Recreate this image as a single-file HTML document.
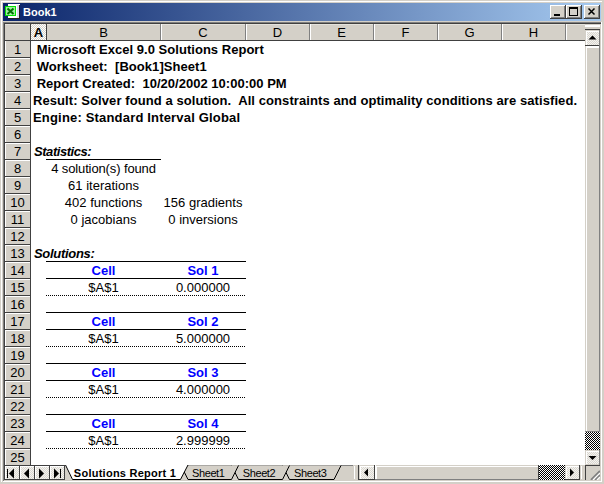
<!DOCTYPE html>
<html><head><meta charset="utf-8"><style>
html,body{margin:0;padding:0;}
body{width:604px;height:484px;overflow:hidden;background:#D4D0C8;position:relative;font-family:"Liberation Sans",sans-serif;}
body>div,body>svg{position:absolute;}
.t{white-space:pre;overflow:visible;}
</style></head><body>
<div style="left:1px;top:1px;width:601px;height:1px;background:#FFFFFF;"></div>
<div style="left:1px;top:1px;width:1px;height:481px;background:#FFFFFF;"></div>
<div style="left:3px;top:3px;width:598px;height:18px;background:linear-gradient(to right,#0A246A,#A6CAF0);"></div>
<svg style="left:5px;top:4px" width="16" height="16" viewBox="0 0 16 16">
<rect x="3" y="0" width="12" height="14" fill="#fff"/>
<rect x="12" y="1" width="2" height="13" fill="#E0D8F0"/>
<rect x="14" y="1" width="1" height="14" fill="#202020"/>
<rect x="3" y="14" width="12" height="1" fill="#202020"/>
<rect x="0" y="2" width="11" height="10" fill="#00E000"/>
<rect x="1" y="3" width="9" height="8" fill="#A0F0A0"/>
<path d="M2.5 4.5 L8.5 10 M8.5 4.5 L2.5 10" stroke="#007000" stroke-width="2"/>
</svg>
<div class="t" style="left:23px;top:3px;width:80px;height:18px;line-height:18px;text-align:left;font-weight:bold;font-size:11px;color:#fff">Book1</div>
<div style="left:550px;top:5px;width:16px;height:14px;background:#D4D0C8;box-shadow:inset -1px -1px #404040,inset 1px 1px #FFFFFF,inset -2px -2px #808080;"></div>
<svg style="left:550px;top:5px" width="16" height="14" viewBox="0 0 16 14"><rect x="4" y="9" width="6" height="2" fill="#000"/></svg>
<div style="left:566px;top:5px;width:16px;height:14px;background:#D4D0C8;box-shadow:inset -1px -1px #404040,inset 1px 1px #FFFFFF,inset -2px -2px #808080;"></div>
<svg style="left:566px;top:5px" width="16" height="14" viewBox="0 0 16 14"><rect x="3.5" y="2.5" width="8" height="8" fill="none" stroke="#000"/><rect x="3" y="3" width="9" height="1" fill="#000"/></svg>
<div style="left:584px;top:5px;width:16px;height:14px;background:#D4D0C8;box-shadow:inset -1px -1px #404040,inset 1px 1px #FFFFFF,inset -2px -2px #808080;"></div>
<svg style="left:584px;top:5px" width="16" height="14" viewBox="0 0 16 14"><path d="M4.5 3.5 L10.5 9.5 M10.5 3.5 L4.5 9.5" stroke="#000" stroke-width="1.5"/></svg>
<div style="left:3px;top:22px;width:598px;height:1px;background:#808080;"></div>
<div style="left:3px;top:22px;width:1px;height:459px;background:#808080;"></div>
<div style="left:4px;top:23px;width:597px;height:1px;background:#404040;"></div>
<div style="left:4px;top:23px;width:1px;height:457px;background:#404040;"></div>
<div style="left:601px;top:22px;width:1px;height:460px;background:#FFFFFF;"></div>
<div style="left:3px;top:481px;width:599px;height:1px;background:#FFFFFF;"></div>
<div style="left:31px;top:41px;width:554px;height:424px;background:#fff;"></div>
<div style="left:5px;top:24px;width:580px;height:16px;background:#D4D0C8;"></div>
<div style="left:5px;top:24px;width:580px;height:1px;background:#E4E2DC;"></div>
<div style="left:5px;top:40px;width:580px;height:1px;background:#404040;"></div>
<div style="left:5px;top:41px;width:25px;height:424px;background:#D4D0C8;"></div>
<div style="left:5px;top:41px;width:1px;height:424px;background:#FFFFFF;"></div>
<div style="left:30px;top:24px;width:1px;height:441px;background:#404040;"></div>
<div style="left:160px;top:24px;width:1px;height:16px;background:#808080;"></div>
<div style="left:161px;top:24px;width:1px;height:16px;background:#FFFFFF;"></div>
<div style="left:245px;top:24px;width:1px;height:16px;background:#808080;"></div>
<div style="left:246px;top:24px;width:1px;height:16px;background:#FFFFFF;"></div>
<div style="left:309px;top:24px;width:1px;height:16px;background:#808080;"></div>
<div style="left:310px;top:24px;width:1px;height:16px;background:#FFFFFF;"></div>
<div style="left:373px;top:24px;width:1px;height:16px;background:#808080;"></div>
<div style="left:374px;top:24px;width:1px;height:16px;background:#FFFFFF;"></div>
<div style="left:437px;top:24px;width:1px;height:16px;background:#808080;"></div>
<div style="left:438px;top:24px;width:1px;height:16px;background:#FFFFFF;"></div>
<div style="left:501px;top:24px;width:1px;height:16px;background:#808080;"></div>
<div style="left:502px;top:24px;width:1px;height:16px;background:#FFFFFF;"></div>
<div style="left:565px;top:24px;width:1px;height:16px;background:#808080;"></div>
<div style="left:566px;top:24px;width:1px;height:16px;background:#FFFFFF;"></div>
<div style="left:31px;top:24px;width:15px;height:16px;background:repeating-conic-gradient(#fff 0 25%,#D4D0C8 0 50%) 0 0/2px 2px;"></div>
<div style="left:30px;top:23px;width:17px;height:1px;background:#404040;"></div>
<div style="left:46px;top:24px;width:1px;height:17px;background:#404040;"></div>
<div class="t" style="left:31px;top:25px;width:15px;height:16px;line-height:16px;text-align:center;font-size:13px;color:#000;font-weight:bold">A</div>
<div class="t" style="left:47px;top:25px;width:113px;height:16px;line-height:16px;text-align:center;font-size:13px;color:#000">B</div>
<div class="t" style="left:161px;top:25px;width:84px;height:16px;line-height:16px;text-align:center;font-size:13px;color:#000">C</div>
<div class="t" style="left:246px;top:25px;width:63px;height:16px;line-height:16px;text-align:center;font-size:13px;color:#000">D</div>
<div class="t" style="left:310px;top:25px;width:63px;height:16px;line-height:16px;text-align:center;font-size:13px;color:#000">E</div>
<div class="t" style="left:374px;top:25px;width:63px;height:16px;line-height:16px;text-align:center;font-size:13px;color:#000">F</div>
<div class="t" style="left:438px;top:25px;width:63px;height:16px;line-height:16px;text-align:center;font-size:13px;color:#000">G</div>
<div class="t" style="left:502px;top:25px;width:63px;height:16px;line-height:16px;text-align:center;font-size:13px;color:#000">H</div>
<div style="left:5px;top:57px;width:25px;height:1px;background:#404040;"></div>
<div class="t" style="left:5px;top:42px;width:25px;height:16px;line-height:16px;text-align:center;font-size:13px;color:#000">1</div>
<div style="left:5px;top:74px;width:25px;height:1px;background:#404040;"></div>
<div style="left:5px;top:58px;width:25px;height:1px;background:#FFFFFF;"></div>
<div class="t" style="left:5px;top:59px;width:25px;height:16px;line-height:16px;text-align:center;font-size:13px;color:#000">2</div>
<div style="left:5px;top:91px;width:25px;height:1px;background:#404040;"></div>
<div style="left:5px;top:75px;width:25px;height:1px;background:#FFFFFF;"></div>
<div class="t" style="left:5px;top:76px;width:25px;height:16px;line-height:16px;text-align:center;font-size:13px;color:#000">3</div>
<div style="left:5px;top:108px;width:25px;height:1px;background:#404040;"></div>
<div style="left:5px;top:92px;width:25px;height:1px;background:#FFFFFF;"></div>
<div class="t" style="left:5px;top:93px;width:25px;height:16px;line-height:16px;text-align:center;font-size:13px;color:#000">4</div>
<div style="left:5px;top:125px;width:25px;height:1px;background:#404040;"></div>
<div style="left:5px;top:109px;width:25px;height:1px;background:#FFFFFF;"></div>
<div class="t" style="left:5px;top:110px;width:25px;height:16px;line-height:16px;text-align:center;font-size:13px;color:#000">5</div>
<div style="left:5px;top:142px;width:25px;height:1px;background:#404040;"></div>
<div style="left:5px;top:126px;width:25px;height:1px;background:#FFFFFF;"></div>
<div class="t" style="left:5px;top:127px;width:25px;height:16px;line-height:16px;text-align:center;font-size:13px;color:#000">6</div>
<div style="left:5px;top:159px;width:25px;height:1px;background:#404040;"></div>
<div style="left:5px;top:143px;width:25px;height:1px;background:#FFFFFF;"></div>
<div class="t" style="left:5px;top:144px;width:25px;height:16px;line-height:16px;text-align:center;font-size:13px;color:#000">7</div>
<div style="left:5px;top:176px;width:25px;height:1px;background:#404040;"></div>
<div style="left:5px;top:160px;width:25px;height:1px;background:#FFFFFF;"></div>
<div class="t" style="left:5px;top:161px;width:25px;height:16px;line-height:16px;text-align:center;font-size:13px;color:#000">8</div>
<div style="left:5px;top:193px;width:25px;height:1px;background:#404040;"></div>
<div style="left:5px;top:177px;width:25px;height:1px;background:#FFFFFF;"></div>
<div class="t" style="left:5px;top:178px;width:25px;height:16px;line-height:16px;text-align:center;font-size:13px;color:#000">9</div>
<div style="left:5px;top:210px;width:25px;height:1px;background:#404040;"></div>
<div style="left:5px;top:194px;width:25px;height:1px;background:#FFFFFF;"></div>
<div class="t" style="left:5px;top:195px;width:25px;height:16px;line-height:16px;text-align:center;font-size:13px;color:#000">10</div>
<div style="left:5px;top:227px;width:25px;height:1px;background:#404040;"></div>
<div style="left:5px;top:211px;width:25px;height:1px;background:#FFFFFF;"></div>
<div class="t" style="left:5px;top:212px;width:25px;height:16px;line-height:16px;text-align:center;font-size:13px;color:#000">11</div>
<div style="left:5px;top:244px;width:25px;height:1px;background:#404040;"></div>
<div style="left:5px;top:228px;width:25px;height:1px;background:#FFFFFF;"></div>
<div class="t" style="left:5px;top:229px;width:25px;height:16px;line-height:16px;text-align:center;font-size:13px;color:#000">12</div>
<div style="left:5px;top:261px;width:25px;height:1px;background:#404040;"></div>
<div style="left:5px;top:245px;width:25px;height:1px;background:#FFFFFF;"></div>
<div class="t" style="left:5px;top:246px;width:25px;height:16px;line-height:16px;text-align:center;font-size:13px;color:#000">13</div>
<div style="left:5px;top:278px;width:25px;height:1px;background:#404040;"></div>
<div style="left:5px;top:262px;width:25px;height:1px;background:#FFFFFF;"></div>
<div class="t" style="left:5px;top:263px;width:25px;height:16px;line-height:16px;text-align:center;font-size:13px;color:#000">14</div>
<div style="left:5px;top:295px;width:25px;height:1px;background:#404040;"></div>
<div style="left:5px;top:279px;width:25px;height:1px;background:#FFFFFF;"></div>
<div class="t" style="left:5px;top:280px;width:25px;height:16px;line-height:16px;text-align:center;font-size:13px;color:#000">15</div>
<div style="left:5px;top:312px;width:25px;height:1px;background:#404040;"></div>
<div style="left:5px;top:296px;width:25px;height:1px;background:#FFFFFF;"></div>
<div class="t" style="left:5px;top:297px;width:25px;height:16px;line-height:16px;text-align:center;font-size:13px;color:#000">16</div>
<div style="left:5px;top:329px;width:25px;height:1px;background:#404040;"></div>
<div style="left:5px;top:313px;width:25px;height:1px;background:#FFFFFF;"></div>
<div class="t" style="left:5px;top:314px;width:25px;height:16px;line-height:16px;text-align:center;font-size:13px;color:#000">17</div>
<div style="left:5px;top:346px;width:25px;height:1px;background:#404040;"></div>
<div style="left:5px;top:330px;width:25px;height:1px;background:#FFFFFF;"></div>
<div class="t" style="left:5px;top:331px;width:25px;height:16px;line-height:16px;text-align:center;font-size:13px;color:#000">18</div>
<div style="left:5px;top:363px;width:25px;height:1px;background:#404040;"></div>
<div style="left:5px;top:347px;width:25px;height:1px;background:#FFFFFF;"></div>
<div class="t" style="left:5px;top:348px;width:25px;height:16px;line-height:16px;text-align:center;font-size:13px;color:#000">19</div>
<div style="left:5px;top:380px;width:25px;height:1px;background:#404040;"></div>
<div style="left:5px;top:364px;width:25px;height:1px;background:#FFFFFF;"></div>
<div class="t" style="left:5px;top:365px;width:25px;height:16px;line-height:16px;text-align:center;font-size:13px;color:#000">20</div>
<div style="left:5px;top:397px;width:25px;height:1px;background:#404040;"></div>
<div style="left:5px;top:381px;width:25px;height:1px;background:#FFFFFF;"></div>
<div class="t" style="left:5px;top:382px;width:25px;height:16px;line-height:16px;text-align:center;font-size:13px;color:#000">21</div>
<div style="left:5px;top:414px;width:25px;height:1px;background:#404040;"></div>
<div style="left:5px;top:398px;width:25px;height:1px;background:#FFFFFF;"></div>
<div class="t" style="left:5px;top:399px;width:25px;height:16px;line-height:16px;text-align:center;font-size:13px;color:#000">22</div>
<div style="left:5px;top:431px;width:25px;height:1px;background:#404040;"></div>
<div style="left:5px;top:415px;width:25px;height:1px;background:#FFFFFF;"></div>
<div class="t" style="left:5px;top:416px;width:25px;height:16px;line-height:16px;text-align:center;font-size:13px;color:#000">23</div>
<div style="left:5px;top:448px;width:25px;height:1px;background:#404040;"></div>
<div style="left:5px;top:432px;width:25px;height:1px;background:#FFFFFF;"></div>
<div class="t" style="left:5px;top:433px;width:25px;height:16px;line-height:16px;text-align:center;font-size:13px;color:#000">24</div>
<div style="left:5px;top:465px;width:25px;height:1px;background:#404040;"></div>
<div style="left:5px;top:449px;width:25px;height:1px;background:#FFFFFF;"></div>
<div class="t" style="left:5px;top:450px;width:25px;height:16px;line-height:16px;text-align:center;font-size:13px;color:#000">25</div>
<div class="t" style="left:33px;top:41px;width:540px;height:17px;line-height:17px;text-align:left;font-weight:bold;font-size:13px;color:#000;letter-spacing:0.03px">&nbsp;Microsoft Excel 9.0 Solutions Report</div>
<div class="t" style="left:33px;top:58px;width:540px;height:17px;line-height:17px;text-align:left;font-weight:bold;font-size:13px;color:#000;letter-spacing:0.05px">&nbsp;Worksheet:&nbsp; [Book1]Sheet1</div>
<div class="t" style="left:33px;top:75px;width:540px;height:17px;line-height:17px;text-align:left;font-weight:bold;font-size:13px;color:#000;letter-spacing:0.02px">&nbsp;Report Created:&nbsp; 10/20/2002 10:00:00 PM</div>
<div class="t" style="left:33px;top:92px;width:560px;height:17px;line-height:17px;text-align:left;font-weight:bold;font-size:13px;color:#000;letter-spacing:0.08px">Result: Solver found a solution.&nbsp; All constraints and optimality conditions are satisfied.</div>
<div class="t" style="left:33px;top:109px;width:540px;height:17px;line-height:17px;text-align:left;font-weight:bold;font-size:13px;color:#000;letter-spacing:0.18px">Engine: Standard Interval Global</div>
<div class="t" style="left:34px;top:143px;width:200px;height:17px;line-height:17px;text-align:left;font-weight:bold;font-style:italic;font-size:13px;color:#000;letter-spacing:-0.45px">Statistics:</div>
<div style="left:46px;top:159px;width:115px;height:1px;background:#000;"></div>
<div class="t" style="left:47px;top:160px;width:113px;height:17px;line-height:17px;text-align:center;font-size:13px;color:#000;letter-spacing:-0.12px">4 solution(s) found</div>
<div class="t" style="left:47px;top:177px;width:113px;height:17px;line-height:17px;text-align:center;font-size:13px;color:#000">61 iterations</div>
<div class="t" style="left:47px;top:194px;width:113px;height:17px;line-height:17px;text-align:center;font-size:13px;color:#000">402 functions</div>
<div class="t" style="left:161px;top:194px;width:84px;height:17px;line-height:17px;text-align:center;font-size:13px;color:#000">156 gradients</div>
<div class="t" style="left:47px;top:211px;width:113px;height:17px;line-height:17px;text-align:center;font-size:13px;color:#000">0 jacobians</div>
<div class="t" style="left:161px;top:211px;width:84px;height:17px;line-height:17px;text-align:center;font-size:13px;color:#000">0 inversions</div>
<div class="t" style="left:34px;top:245px;width:200px;height:17px;line-height:17px;text-align:left;font-weight:bold;font-style:italic;font-size:13px;color:#000;letter-spacing:-0.3px">Solutions:</div>
<div style="left:46px;top:261px;width:200px;height:1px;background:#000;"></div>
<div class="t" style="left:47px;top:262px;width:113px;height:17px;line-height:17px;text-align:center;font-weight:bold;font-size:13px;color:#00f">Cell</div>
<div class="t" style="left:161px;top:262px;width:84px;height:17px;line-height:17px;text-align:center;font-weight:bold;font-size:13px;color:#00f">Sol 1</div>
<div style="left:46px;top:278px;width:200px;height:1px;background:#000;"></div>
<div class="t" style="left:47px;top:279px;width:113px;height:17px;line-height:17px;text-align:center;font-size:13px;color:#000">$A$1</div>
<div class="t" style="left:161px;top:279px;width:84px;height:17px;line-height:17px;text-align:center;font-size:13px;color:#000">0.000000</div>
<div style="left:46px;top:295px;width:200px;height:1px;background:repeating-linear-gradient(to right,#000 0 1px,transparent 1px 2px);"></div>
<div style="left:46px;top:312px;width:200px;height:1px;background:#000;"></div>
<div class="t" style="left:47px;top:313px;width:113px;height:17px;line-height:17px;text-align:center;font-weight:bold;font-size:13px;color:#00f">Cell</div>
<div class="t" style="left:161px;top:313px;width:84px;height:17px;line-height:17px;text-align:center;font-weight:bold;font-size:13px;color:#00f">Sol 2</div>
<div style="left:46px;top:329px;width:200px;height:1px;background:#000;"></div>
<div class="t" style="left:47px;top:330px;width:113px;height:17px;line-height:17px;text-align:center;font-size:13px;color:#000">$A$1</div>
<div class="t" style="left:161px;top:330px;width:84px;height:17px;line-height:17px;text-align:center;font-size:13px;color:#000">5.000000</div>
<div style="left:46px;top:346px;width:200px;height:1px;background:repeating-linear-gradient(to right,#000 0 1px,transparent 1px 2px);"></div>
<div style="left:46px;top:363px;width:200px;height:1px;background:#000;"></div>
<div class="t" style="left:47px;top:364px;width:113px;height:17px;line-height:17px;text-align:center;font-weight:bold;font-size:13px;color:#00f">Cell</div>
<div class="t" style="left:161px;top:364px;width:84px;height:17px;line-height:17px;text-align:center;font-weight:bold;font-size:13px;color:#00f">Sol 3</div>
<div style="left:46px;top:380px;width:200px;height:1px;background:#000;"></div>
<div class="t" style="left:47px;top:381px;width:113px;height:17px;line-height:17px;text-align:center;font-size:13px;color:#000">$A$1</div>
<div class="t" style="left:161px;top:381px;width:84px;height:17px;line-height:17px;text-align:center;font-size:13px;color:#000">4.000000</div>
<div style="left:46px;top:397px;width:200px;height:1px;background:repeating-linear-gradient(to right,#000 0 1px,transparent 1px 2px);"></div>
<div style="left:46px;top:414px;width:200px;height:1px;background:#000;"></div>
<div class="t" style="left:47px;top:415px;width:113px;height:17px;line-height:17px;text-align:center;font-weight:bold;font-size:13px;color:#00f">Cell</div>
<div class="t" style="left:161px;top:415px;width:84px;height:17px;line-height:17px;text-align:center;font-weight:bold;font-size:13px;color:#00f">Sol 4</div>
<div style="left:46px;top:431px;width:200px;height:1px;background:#000;"></div>
<div class="t" style="left:47px;top:432px;width:113px;height:17px;line-height:17px;text-align:center;font-size:13px;color:#000">$A$1</div>
<div class="t" style="left:161px;top:432px;width:84px;height:17px;line-height:17px;text-align:center;font-size:13px;color:#000">2.999999</div>
<div style="left:46px;top:448px;width:200px;height:1px;background:repeating-linear-gradient(to right,#000 0 1px,transparent 1px 2px);"></div>
<div style="left:5px;top:465px;width:60px;height:1px;background:#404040;"></div>
<div style="left:5px;top:479px;width:60px;height:1px;background:#404040;"></div>
<div style="left:5px;top:466px;width:15px;height:13px;background:repeating-conic-gradient(#F4F3F0 0 25%,#DAD7D0 0 50%) 0 0/2px 2px;"></div>
<div style="left:5px;top:466px;width:14px;height:1px;background:#FFFFFF;"></div>
<div style="left:5px;top:466px;width:1px;height:13px;background:#FFFFFF;"></div>
<div style="left:19px;top:466px;width:1px;height:13px;background:#404040;"></div>
<div style="left:20px;top:466px;width:15px;height:13px;background:repeating-conic-gradient(#F4F3F0 0 25%,#DAD7D0 0 50%) 0 0/2px 2px;"></div>
<div style="left:20px;top:466px;width:14px;height:1px;background:#FFFFFF;"></div>
<div style="left:20px;top:466px;width:1px;height:13px;background:#FFFFFF;"></div>
<div style="left:34px;top:466px;width:1px;height:13px;background:#404040;"></div>
<div style="left:35px;top:466px;width:15px;height:13px;background:repeating-conic-gradient(#F4F3F0 0 25%,#DAD7D0 0 50%) 0 0/2px 2px;"></div>
<div style="left:35px;top:466px;width:14px;height:1px;background:#FFFFFF;"></div>
<div style="left:35px;top:466px;width:1px;height:13px;background:#FFFFFF;"></div>
<div style="left:49px;top:466px;width:1px;height:13px;background:#404040;"></div>
<div style="left:50px;top:466px;width:15px;height:13px;background:repeating-conic-gradient(#F4F3F0 0 25%,#DAD7D0 0 50%) 0 0/2px 2px;"></div>
<div style="left:50px;top:466px;width:14px;height:1px;background:#FFFFFF;"></div>
<div style="left:50px;top:466px;width:1px;height:13px;background:#FFFFFF;"></div>
<div style="left:64px;top:466px;width:1px;height:13px;background:#404040;"></div>
<svg style="left:5px;top:466px" width="60" height="13" viewBox="0 0 60 13">
<rect x="2" y="3" width="1" height="9" fill="#000"/><path d="M4 7.5 L9 2.5 L9 12.5 Z" fill="#000"/>
<path d="M19 7.5 L24 2.5 L24 12.5 Z" fill="#000"/>
<path d="M39 7.5 L34 2.5 L34 12.5 Z" fill="#000"/>
<path d="M54 7.5 L49 2.5 L49 12.5 Z" fill="#000"/><rect x="55" y="3" width="1" height="9" fill="#000"/>
</svg>
<svg style="left:65px;top:465px" width="290" height="15" viewBox="0 0 290 15">
<rect x="0" y="0" width="290" height="15" fill="#D4D0C8"/>
<rect x="0" y="0" width="290" height="1" fill="#808080"/>
<path d="M217.5 0.5 L224.5 14.5 L269 14.5 L276 0.5" fill="#D4D0C8" stroke="#000" stroke-width="1"/><text x="245.25" y="11.5" font-family="Liberation Sans" font-size="11" text-anchor="middle" letter-spacing="-0.4">Sheet3</text><path d="M166.5 0.5 L173.5 14.5 L217.5 14.5 L224.5 0.5" fill="#D4D0C8" stroke="#000" stroke-width="1"/><text x="194.0" y="11.5" font-family="Liberation Sans" font-size="11" text-anchor="middle" letter-spacing="-0.4">Sheet2</text><path d="M116 0.5 L123 14.5 L166.5 14.5 L173.5 0.5" fill="#D4D0C8" stroke="#000" stroke-width="1"/><text x="143.25" y="11.5" font-family="Liberation Sans" font-size="11" text-anchor="middle" letter-spacing="-0.4">Sheet1</text><path d="M0 0 L7 14.5 L115 14.5 L123 0 Z" fill="#fff"/><path d="M0.5 0 L7.5 14.5 L115.5 14.5 L123 0" fill="none" stroke="#000" stroke-width="1"/><text x="60" y="11.5" font-family="Liberation Sans" font-size="11" font-weight="bold" text-anchor="middle" letter-spacing="0.25">Solutions Report 1</text></svg>
<div style="left:353px;top:465px;width:5px;height:15px;background:#D4D0C8;"></div>
<div style="left:354px;top:466px;width:1px;height:13px;background:#FFFFFF;"></div>
<div style="left:358px;top:465px;width:1px;height:15px;background:#404040;"></div>
<div style="left:359px;top:465px;width:16px;height:15px;background:repeating-conic-gradient(#F4F3F0 0 25%,#DAD7D0 0 50%) 0 0/2px 2px;"></div>
<div style="left:359px;top:465px;width:16px;height:1px;background:#D4D0C8;"></div>
<div style="left:359px;top:465px;width:1px;height:15px;background:#D4D0C8;"></div>
<div style="left:360px;top:466px;width:14px;height:1px;background:#FFFFFF;"></div>
<div style="left:360px;top:466px;width:1px;height:13px;background:#FFFFFF;"></div>
<div style="left:359px;top:479px;width:16px;height:1px;background:#404040;"></div>
<div style="left:374px;top:465px;width:1px;height:15px;background:#404040;"></div>
<svg style="left:359px;top:465px" width="16" height="15"><path d="M5 7.5 L9 3.5 L9 11.5 Z" fill="#000"/></svg>
<div style="left:375px;top:465px;width:164px;height:15px;background:#D4D0C8;"></div>
<div style="left:375px;top:465px;width:164px;height:1px;background:#D4D0C8;"></div>
<div style="left:375px;top:465px;width:1px;height:15px;background:#FFFFFF;"></div>
<div style="left:376px;top:466px;width:162px;height:1px;background:#FFFFFF;"></div>
<div style="left:376px;top:466px;width:1px;height:13px;background:#FFFFFF;"></div>
<div style="left:375px;top:479px;width:164px;height:1px;background:#808080;"></div>
<div style="left:538px;top:465px;width:1px;height:15px;background:#404040;"></div>
<div style="left:539px;top:465px;width:26px;height:15px;background:repeating-conic-gradient(#000 0 25%,#fff 0 50%) 0 0/2px 2px;"></div>
<div style="left:565px;top:465px;width:15px;height:15px;background:repeating-conic-gradient(#F4F3F0 0 25%,#DAD7D0 0 50%) 0 0/2px 2px;"></div>
<div style="left:565px;top:465px;width:15px;height:1px;background:#D4D0C8;"></div>
<div style="left:565px;top:465px;width:1px;height:15px;background:#D4D0C8;"></div>
<div style="left:566px;top:466px;width:13px;height:1px;background:#FFFFFF;"></div>
<div style="left:566px;top:466px;width:1px;height:13px;background:#FFFFFF;"></div>
<div style="left:565px;top:479px;width:15px;height:1px;background:#404040;"></div>
<div style="left:579px;top:465px;width:1px;height:15px;background:#404040;"></div>
<svg style="left:565px;top:465px" width="15" height="15"><path d="M9 7.5 L5 3.5 L5 11.5 Z" fill="#000"/></svg>
<div style="left:580px;top:465px;width:5px;height:15px;background:#D4D0C8;"></div>
<div style="left:581px;top:466px;width:1px;height:13px;background:#FFFFFF;"></div>
<div style="left:585px;top:465px;width:15px;height:15px;background:#D4D0C8;"></div>
<div style="left:585px;top:465px;width:15px;height:1px;background:#404040;"></div>
<div style="left:585px;top:465px;width:1px;height:15px;background:#404040;"></div>
<svg style="left:586px;top:466px" width="14" height="14"><path d="M14 5 L5 14 M14 9 L9 14" stroke="#808080" stroke-width="2"/><path d="M14 7 L7 14 M14 11 L11 14" stroke="#fff" stroke-width="1.2"/></svg>
<div style="left:585px;top:24px;width:15px;height:441px;background:#D4D0C8;"></div>
<div style="left:585px;top:25px;width:15px;height:2px;background:#FFFFFF;"></div>
<div style="left:585px;top:29px;width:15px;height:1px;background:#404040;"></div>
<div style="left:585px;top:30px;width:15px;height:16px;background:repeating-conic-gradient(#F4F3F0 0 25%,#DAD7D0 0 50%) 0 0/2px 2px;"></div>
<div style="left:585px;top:30px;width:15px;height:1px;background:#D4D0C8;"></div>
<div style="left:585px;top:30px;width:1px;height:16px;background:#D4D0C8;"></div>
<div style="left:586px;top:31px;width:13px;height:1px;background:#FFFFFF;"></div>
<div style="left:586px;top:31px;width:1px;height:14px;background:#FFFFFF;"></div>
<div style="left:585px;top:45px;width:15px;height:1px;background:#404040;"></div>
<div style="left:599px;top:30px;width:1px;height:16px;background:#808080;"></div>
<svg style="left:585px;top:30px" width="15" height="16"><path d="M7.5 5.5 L3.5 9.5 L11.5 9.5 Z" fill="#000"/></svg>
<div style="left:585px;top:46px;width:15px;height:386px;background:#D4D0C8;"></div>
<div style="left:585px;top:46px;width:15px;height:1px;background:#FFFFFF;"></div>
<div style="left:585px;top:46px;width:1px;height:386px;background:#D4D0C8;"></div>
<div style="left:586px;top:47px;width:13px;height:1px;background:#FFFFFF;"></div>
<div style="left:586px;top:47px;width:1px;height:384px;background:#FFFFFF;"></div>
<div style="left:585px;top:431px;width:15px;height:1px;background:#808080;"></div>
<div style="left:599px;top:46px;width:1px;height:386px;background:#808080;"></div>
<div style="left:585px;top:432px;width:15px;height:18px;background:repeating-conic-gradient(#000 0 25%,#fff 0 50%) 0 0/2px 2px;"></div>
<div style="left:585px;top:450px;width:15px;height:15px;background:repeating-conic-gradient(#F4F3F0 0 25%,#DAD7D0 0 50%) 0 0/2px 2px;"></div>
<div style="left:585px;top:450px;width:15px;height:1px;background:#D4D0C8;"></div>
<div style="left:585px;top:450px;width:1px;height:15px;background:#D4D0C8;"></div>
<div style="left:586px;top:451px;width:13px;height:1px;background:#FFFFFF;"></div>
<div style="left:586px;top:451px;width:1px;height:13px;background:#FFFFFF;"></div>
<div style="left:585px;top:464px;width:15px;height:1px;background:#D4D0C8;"></div>
<div style="left:599px;top:450px;width:1px;height:15px;background:#808080;"></div>
<svg style="left:585px;top:450px" width="15" height="15"><path d="M7.5 10 L3.5 6 L11.5 6 Z" fill="#000"/></svg>
</body></html>
